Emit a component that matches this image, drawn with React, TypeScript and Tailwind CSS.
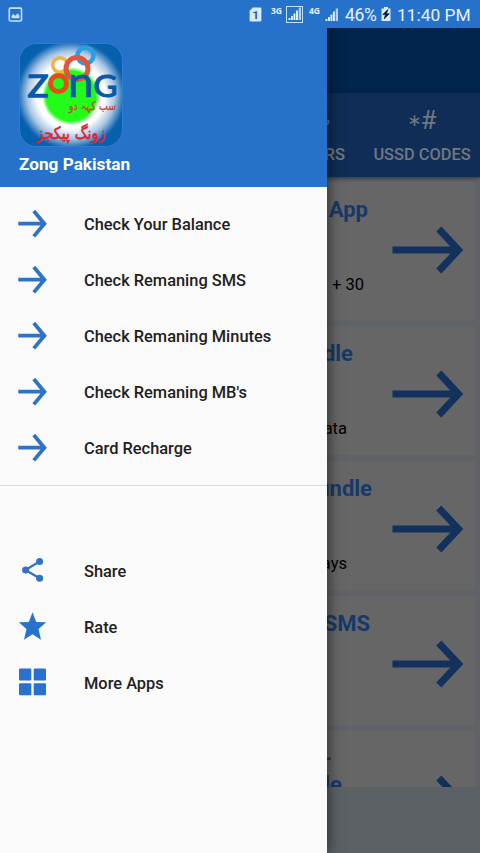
import type { ReactNode } from 'react';

type MenuItem = {
  label: string;
  icon: ReactNode;
};

type Bundle = {
  title: ReactNode;
  detail?: string;
  cardClass: string;
  titleClass: string;
  detailClass?: string;
};

const ArrowIcon = () => (
  <svg viewBox="0 0 30 30" className="h-[30px] w-[30px]" fill="none" stroke="#2f73c1">
    <path d="M1.3 14.7H27M16.8 2L27.4 14.7L16.8 27.4" strokeWidth="3.8" />
  </svg>
);

const ShareIcon = () => (
  <svg viewBox="0 0 30 30" className="mb-[2px] h-[30px] w-[30px]" fill="#2f73c1" stroke="#2f73c1">
    <path d="M22.5 6.5L8.5 15L22.5 23.2" fill="none" strokeWidth="2.2" />
    <circle cx="22.6" cy="6.6" r="3.5" stroke="none" />
    <circle cx="8.6" cy="15" r="3.5" stroke="none" />
    <circle cx="22.6" cy="23.2" r="3.5" stroke="none" />
  </svg>
);

const StarIcon = () => (
  <svg viewBox="0 0 30 30" className="mb-[2px] h-[30px] w-[30px]" fill="#2872ce">
    <path d="M15.5 1.2L19.2 11L29.2 11.3L21.5 18L24 28.7L15.5 23.2L7 28.7L9.5 18L1.8 11.3L11.8 11Z" />
  </svg>
);

const AppsIcon = () => (
  <svg viewBox="0 0 30 30" className="mb-[2px] h-[30px] w-[30px]" fill="#2872ce">
    <rect x="2" y="1.5" width="12.3" height="12" rx="1" />
    <rect x="16.7" y="1.5" width="12.3" height="12" rx="1" />
    <rect x="2" y="16.3" width="12.3" height="12" rx="1" />
    <rect x="16.7" y="16.3" width="12.3" height="12" rx="1" />
  </svg>
);

const SignalIcon = () => (
  <svg viewBox="0 0 14 14" className="h-[14px] w-[14px]" fill="#e4f1ff">
    <rect x="0.5" y="11" width="1.9" height="2" />
    <rect x="3" y="9" width="1.9" height="4" />
    <rect x="5.5" y="6.5" width="1.9" height="6.5" />
    <rect x="8" y="3.5" width="1.9" height="9.5" />
    <rect x="10.7" y="0.5" width="2.3" height="12.5" opacity="0.75" />
  </svg>
);

const Logo = () => (
  <svg viewBox="0 0 104 104" className="block h-[104px] w-[104px]">
    <defs>
      <radialGradient id="glow" cx="52" cy="52" r="56" gradientUnits="userSpaceOnUse">
        <stop offset="0" stopColor="#fff" />
        <stop offset="0.6" stopColor="#fff" />
        <stop offset="0.78" stopColor="#a9c6e4" />
        <stop offset="0.96" stopColor="#0a63b1" />
        <stop offset="1" stopColor="#0560ae" />
      </radialGradient>
      <radialGradient id="ball">
        <stop offset="0" stopColor="#22fc18" />
        <stop offset="0.86" stopColor="#22fc18" />
        <stop offset="1" stopColor="#22fc18" stopOpacity="0" />
      </radialGradient>
    </defs>
    <rect x="0.5" y="0.5" width="103" height="103" rx="17" fill="url(#glow)" stroke="#2e7fd0" />
    <circle cx="52" cy="53" r="29" fill="url(#ball)" />
    <circle cx="66.5" cy="12.5" r="8" fill="none" stroke="#2b9fe2" strokeWidth="4.5" />
    <circle cx="41" cy="22" r="7.3" fill="none" stroke="#eeb548" strokeWidth="3.6" />
    <circle cx="58" cy="25.5" r="11" fill="none" stroke="#e0553d" strokeWidth="5" />
    <g fill="#0a58a8" stroke="#0a58a8" fontFamily="Lato, sans-serif">
      <text x="8.5" y="54.3" fontSize="31.5" strokeWidth="1.4" textLength="21" lengthAdjust="spacingAndGlyphs">Z</text>
      <text x="49" y="54.3" fontSize="43" strokeWidth="0.6" textLength="25.5" lengthAdjust="spacingAndGlyphs">n</text>
      <text x="74.5" y="54.3" fontSize="31.5" strokeWidth="1.2" textLength="24" lengthAdjust="spacingAndGlyphs">G</text>
    </g>
    <circle cx="39.5" cy="40.5" r="8" fill="none" stroke="#ea4a1c" strokeWidth="5" />
    <g fill="#e01f30" fontFamily="'DejaVu Sans', sans-serif" direction="rtl">
      <text x="97" y="67" fontSize="12" fill="#c5482e" stroke="#c5482e" strokeWidth="0.3" textLength="47" lengthAdjust="spacingAndGlyphs">سب کہہ دو</text>
      <text x="86.5" y="95.5" fontSize="17" stroke="#e01f30" strokeWidth="0.6" textLength="69" lengthAdjust="spacingAndGlyphs">زونگ پیکجز</text>
    </g>
  </svg>
);

const balanceItems: MenuItem[] = [
  { label: 'Check Your Balance', icon: <ArrowIcon /> },
  { label: 'Check Remaning SMS', icon: <ArrowIcon /> },
  { label: 'Check Remaning Minutes', icon: <ArrowIcon /> },
  { label: "Check Remaning MB's", icon: <ArrowIcon /> },
  { label: 'Card Recharge', icon: <ArrowIcon /> },
];

const appItems: MenuItem[] = [
  { label: 'Share', icon: <ShareIcon /> },
  { label: 'Rate', icon: <StarIcon /> },
  { label: 'More Apps', icon: <AppsIcon /> },
];

const bundles: Bundle[] = [
  { title: 'App', detail: '+ 30', cardClass: 'h-[138px]', titleClass: 'w-[41px]', detailClass: 'w-[37px]' },
  { title: 'dle', detail: 'ata', cardClass: 'h-[129px]', titleClass: 'w-[26px]', detailClass: 'w-[20px]' },
  { title: 'undle', detail: 'ays', cardClass: 'h-[129px]', titleClass: 'w-[45px]', detailClass: 'w-[20px]' },
  { title: 'SMS', cardClass: 'h-[129px]', titleClass: 'w-[43px]' },
  { title: <><span className="mr-[10px]">-</span><br />le</>, cardClass: 'h-[129px]', titleClass: 'w-[15px]' },
];

const StatusBar = () => (
  <header className="absolute inset-x-0 top-0 z-20 flex h-7 items-center bg-[#2672cb] text-[#e4f1ff]">
    <svg viewBox="0 0 14 14" className="ml-2 h-[15px] w-[15px]" fill="none">
      <rect x="1.2" y="1" width="11.4" height="12" rx="1" stroke="#c5e2fb" strokeWidth="1.5" />
      <path d="M3.3 10.5V8.2L5 6.6L7 8.2L9 5.8L10.6 8V10.5Z" fill="#c5e2fb" />
    </svg>
    <svg viewBox="0 0 12 14" className="ml-[226px] h-[15px] w-[13px]">
      <path d="M3.5 0.5H10.5Q11.5 0.5 11.5 1.5V12.5Q11.5 13.5 10.5 13.5H1.5Q0.5 13.5 0.5 12.5V3.5Z" fill="#d5eafe" />
      <text x="6.1" y="11" fontSize="11" fontWeight="700" fontFamily="Roboto, sans-serif" textAnchor="middle" fill="#2e5d93">1</text>
    </svg>
    <span className="mb-[6px] ml-[9px] w-[13px] font-['Noto_Sans',sans-serif] text-[8.5px] leading-3 font-bold">3G</span>
    <span className="ml-[2px] flex h-[17px] w-[17px] items-center justify-center border border-[#c5e2fb]">
      <SignalIcon />
    </span>
    <span className="mb-[6px] ml-[6px] w-[15px] font-['Noto_Sans',sans-serif] text-[8.5px] leading-3 font-bold">4G</span>
    <span className="mt-px ml-px">
      <SignalIcon />
    </span>
    <span className="mt-[2px] ml-[6px] w-[34px] text-[17.5px] tracking-[-0.3px]">46%</span>
    <svg viewBox="0 0 10 14" className="ml-[2px] h-[14px] w-[10px]">
      <path d="M3 0H7V1.5H9.5V14H0.5V1.5H3Z" fill="#d5eafe" />
      <path d="M6.8 2.5L1.8 7.6H4.5L3.2 12L8.3 6.7H5.5Z" fill="#0b1c31" stroke="#0b1c31" strokeWidth="0.7" />
    </svg>
    <span className="mt-[2px] ml-[6px] text-[17.4px] whitespace-nowrap">11:40 PM</span>
  </header>
);

const MenuRow = ({ label, icon }: MenuItem) => (
  <li className="flex h-14 items-center pl-[17px]">
    {icon}
    <span className="ml-[37px] pt-[3px] text-[16.4px] font-medium text-[#212121]">{label}</span>
  </li>
);

const BundleCard = ({ title, detail, cardClass, titleClass, detailClass }: Bundle) => (
  <li className={`flex w-[148px] shrink-0 justify-between rounded-r-[2px] bg-[#666] ${cardClass}`}>
    <div className="flex flex-col items-start pt-[15px]">
      <h2 className={`flex h-[26px] justify-end text-right text-[22px] leading-[26px] font-bold text-[#17396a] ${titleClass}`}>
        <span>{title}</span>
      </h2>
      {detail && (
        <p className={`mt-[51px] flex justify-end text-[16.5px] leading-[22px] whitespace-nowrap text-black ${detailClass}`}>
          <span>{detail}</span>
        </p>
      )}
    </div>
    <svg viewBox="0 0 72 48" className="mt-[44px] mr-[11px] h-12 w-[72px] shrink-0" fill="none" stroke="#12315c">
      <path d="M0.5 24H66M46.8 3L66.5 24L46.8 45" strokeWidth="7" />
    </svg>
  </li>
);

const App = () => {
  return (
    <div className="relative flex h-[853px] w-[480px] overflow-hidden bg-[#5c6166] font-[Roboto,sans-serif]">
      <StatusBar />

      {/* Navigation drawer */}
      <aside className="z-10 flex w-[327px] shrink-0 flex-col bg-[#fafafa] shadow-[0_0_14px_rgba(0,0,0,0.65)]">
        <div className="flex h-[187px] flex-col bg-[#2672cb] pt-[43px] pl-[19px]">
          <Logo />
          <p className="mt-[6px] text-[17.2px] leading-[22px] font-bold text-white">Zong Pakistan</p>
        </div>
        <ul className="pt-[9px]">
          {balanceItems.map((item) => (
            <MenuRow key={item.label} {...item} />
          ))}
        </ul>
        <hr className="mt-[9px] border-[#dcdcdc]" />
        <ul className="pt-[57px]">
          {appItems.map((item) => (
            <MenuRow key={item.label} {...item} />
          ))}
        </ul>
      </aside>

      {/* Dimmed page behind the drawer */}
      <main className="flex w-[153px] flex-col">
        <div className="h-[93px] shrink-0 bg-[#02254d]" />
        <nav className="z-[1] flex h-[84px] shrink-0 bg-[#0f2d56] text-[#6f7881] shadow-[0_1px_4px_rgba(0,0,0,0.5)]">
          <div className="flex w-[18px] flex-col items-end pt-[12px]">
            <span className="mr-[15px] h-[30px] text-[22px] leading-[20px]">,</span>
            <span className="mt-[9px] text-[16.5px] leading-[22px] font-medium">RS</span>
          </div>
          <div className="ml-[28px] flex w-[98px] flex-col items-center pt-[12px]">
            <span className="flex h-[30px] text-[26px] leading-[30px]">
              <span className="-mr-px font-['DejaVu_Sans',sans-serif] text-[17px]">∗</span>
              <span>#</span>
            </span>
            <span className="mt-[9px] text-[16.4px] leading-[22px] font-medium whitespace-nowrap">USSD CODES</span>
          </div>
        </nav>
        <ul className="flex h-[610px] shrink-0 flex-col gap-[6px] overflow-hidden bg-[#5f6266] pt-[5px]">
          {bundles.map((bundle, index) => (
            <BundleCard key={index} {...bundle} />
          ))}
        </ul>
      </main>
    </div>
  );
};

export default App;
